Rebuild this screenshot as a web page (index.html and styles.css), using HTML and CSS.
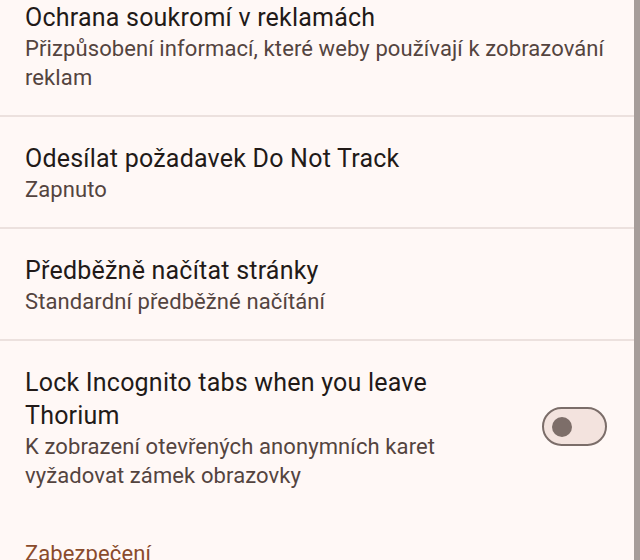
FILE: index.html
```html
<!DOCTYPE html>
<html lang="cs">
<head>
<meta charset="utf-8">
<title>Nastavení</title>
<link rel="stylesheet" href="styles.css">
</head>
<body>
<div class="screen">
  <main class="list">
    <div class="item">
      <div class="text">
        <div class="title">Ochrana soukromí v reklamách</div>
        <div class="summary">Přizpůsobení informací, které weby používají k zobrazování reklam</div>
      </div>
    </div>
    <div class="divider"></div>
    <div class="item">
      <div class="text">
        <div class="title">Odesílat požadavek Do Not Track</div>
        <div class="summary">Zapnuto</div>
      </div>
    </div>
    <div class="divider"></div>
    <div class="item">
      <div class="text">
        <div class="title">Předběžně načítat stránky</div>
        <div class="summary">Standardní předběžné načítání</div>
      </div>
    </div>
    <div class="divider"></div>
    <div class="item item-switch">
      <div class="text text-narrow">
        <div class="title">Lock Incognito tabs when you leave Thorium</div>
        <div class="summary">K zobrazení otevřených anonymních karet vyžadovat zámek obrazovky</div>
      </div>
      <div class="switch"><div class="thumb"></div></div>
    </div>
    <div class="section-header">Zabezpečení</div>
  </main>
  <div class="scrollbar"></div>
</div>
</body>
</html>
```
FILE: styles.css
```css
html, body {
  margin: 0;
  padding: 0;
  height: 100%;
  overflow: hidden;
  background: #fff8f6;
}
body {
  font-family: Roboto, "Noto Sans", sans-serif;
}
.screen {
  display: flex;
  height: 560px;
  overflow: hidden;
}
.list {
  flex: 1;
  margin-top: -24px;
}
.scrollbar {
  width: 6px;
  background: #a69d9a;
}
.item {
  display: flex;
  align-items: center;
  padding: 25px 27px 23px 25px;
}
.text {
  flex: 1;
  min-width: 0;
}
.text-narrow {
  flex: 0 0 470px;
  margin-right: auto;
}
.title {
  font-size: 25px;
  line-height: 33px;
  letter-spacing: 0.22px;
  color: #221a18;
}
.summary {
  font-size: 22px;
  line-height: 29px;
  letter-spacing: 0.1px;
  color: #54443f;
}
.divider {
  height: 2px;
  background: #ece1de;
}
.switch {
  box-sizing: border-box;
  width: 65px;
  height: 39px;
  border: 2.5px solid #7b6d69;
  border-radius: 20px;
  background: #f3e3de;
  display: flex;
  align-items: center;
  padding-left: 7.5px;
  margin-top: -3px;
}
.thumb {
  width: 20px;
  height: 20px;
  border-radius: 50%;
  background: #7d6e69;
}
.section-header {
  padding: 26px 25px 0;
  font-size: 22px;
  line-height: 29px;
  letter-spacing: 0.1px;
  color: #8a4b2c;
}
```
